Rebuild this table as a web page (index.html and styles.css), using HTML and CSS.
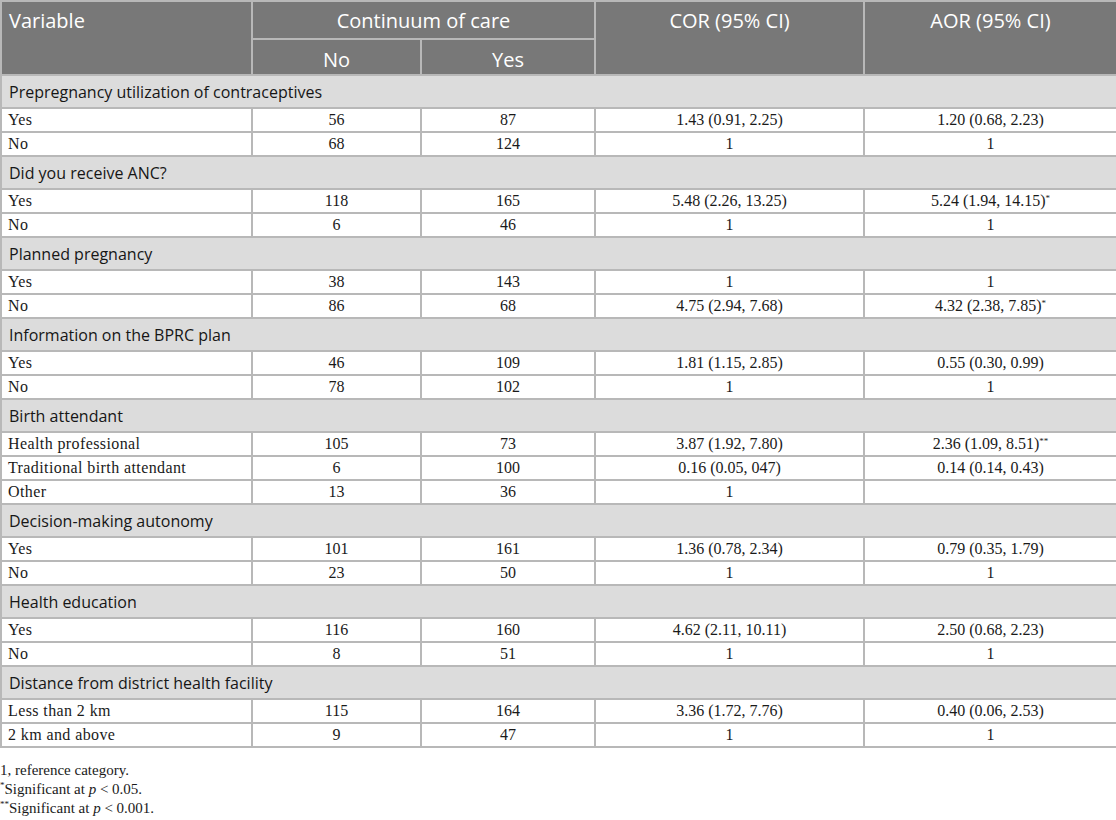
FILE: index.html
```html
<!DOCTYPE html>
<html lang="en">
<head>
    <meta charset="UTF-8">
    <meta name="viewport" content="width=device-width, initial-scale=1.0">
    <title>Continuum of care</title>
    <link rel="stylesheet" href="styles.css">
</head>
<body>
    <table class="results">
        <colgroup>
            <col class="c-var">
            <col class="c-no">
            <col class="c-yes">
            <col class="c-cor">
            <col class="c-aor">
        </colgroup>
        <thead>
            <tr class="head-top">
                <th rowspan="2" class="left">Variable</th>
                <th colspan="2">Continuum of care</th>
                <th rowspan="2">COR (95% CI)</th>
                <th rowspan="2">AOR (95% CI)</th>
            </tr>
            <tr class="head-sub">
                <th>No</th>
                <th>Yes</th>
            </tr>
        </thead>
        <tbody>
            <tr class="group"><td colspan="5">Prepregnancy utilization of contraceptives</td></tr>
            <tr><td class="label">Yes</td><td>56</td><td>87</td><td>1.43 (0.91, 2.25)</td><td>1.20 (0.68, 2.23)</td></tr>
            <tr><td class="label">No</td><td>68</td><td>124</td><td>1</td><td>1</td></tr>

            <tr class="group"><td colspan="5">Did you receive ANC?</td></tr>
            <tr><td class="label">Yes</td><td>118</td><td>165</td><td>5.48 (2.26, 13.25)</td><td>5.24 (1.94, 14.15)<sup>*</sup></td></tr>
            <tr><td class="label">No</td><td>6</td><td>46</td><td>1</td><td>1</td></tr>

            <tr class="group"><td colspan="5">Planned pregnancy</td></tr>
            <tr><td class="label">Yes</td><td>38</td><td>143</td><td>1</td><td>1</td></tr>
            <tr><td class="label">No</td><td>86</td><td>68</td><td>4.75 (2.94, 7.68)</td><td>4.32 (2.38, 7.85)<sup>*</sup></td></tr>

            <tr class="group"><td colspan="5">Information on the BPRC plan</td></tr>
            <tr><td class="label">Yes</td><td>46</td><td>109</td><td>1.81 (1.15, 2.85)</td><td>0.55 (0.30, 0.99)</td></tr>
            <tr><td class="label">No</td><td>78</td><td>102</td><td>1</td><td>1</td></tr>

            <tr class="group"><td colspan="5">Birth attendant</td></tr>
            <tr><td class="label">Health professional</td><td>105</td><td>73</td><td>3.87 (1.92, 7.80)</td><td>2.36 (1.09, 8.51)<sup>**</sup></td></tr>
            <tr><td class="label">Traditional birth attendant</td><td>6</td><td>100</td><td>0.16 (0.05, 047)</td><td>0.14 (0.14, 0.43)</td></tr>
            <tr><td class="label">Other</td><td>13</td><td>36</td><td>1</td><td></td></tr>

            <tr class="group"><td colspan="5">Decision-making autonomy</td></tr>
            <tr><td class="label">Yes</td><td>101</td><td>161</td><td>1.36 (0.78, 2.34)</td><td>0.79 (0.35, 1.79)</td></tr>
            <tr><td class="label">No</td><td>23</td><td>50</td><td>1</td><td>1</td></tr>

            <tr class="group"><td colspan="5">Health education</td></tr>
            <tr><td class="label">Yes</td><td>116</td><td>160</td><td>4.62 (2.11, 10.11)</td><td>2.50 (0.68, 2.23)</td></tr>
            <tr><td class="label">No</td><td>8</td><td>51</td><td>1</td><td>1</td></tr>

            <tr class="group"><td colspan="5">Distance from district health facility</td></tr>
            <tr><td class="label">Less than 2 km</td><td>115</td><td>164</td><td>3.36 (1.72, 7.76)</td><td>0.40 (0.06, 2.53)</td></tr>
            <tr><td class="label">2 km and above</td><td>9</td><td>47</td><td>1</td><td>1</td></tr>
        </tbody>
    </table>

    <div class="notes">
        <p>1, reference category.</p>
        <p><sup>*</sup>Significant at <i>p</i> &lt; 0.05.</p>
        <p><sup>**</sup>Significant at <i>p</i> &lt; 0.001.</p>
    </div>
</body>
</html>
```

FILE: styles.css
```css
body {
    margin: 0;
    padding: 0;
    background-color: #fff;
    font-family: "Liberation Serif", "Times New Roman", serif;
    color: #1a1a1a;
}

.results {
    width: 1116px;
    border-collapse: collapse;
    table-layout: fixed;
}

.c-var { width: 251px; }
.c-no { width: 169px; }
.c-yes { width: 174px; }
.c-cor { width: 269px; }
.c-aor { width: 253px; }

.results th,
.results td {
    border: 2px solid #b8b8b8;
}

/* data rows */
.results td {
    height: 22px;
    padding: 0 6px;
    font-size: 16px;
    text-align: center;
}

.results td.label {
    text-align: left;
    font-size: 16px;
    letter-spacing: 0.4px;
}

/* header */
.results th {
    background-color: #787878;
    color: #fff;
    font-family: "Open Sans", "Noto Sans", sans-serif;
    font-weight: normal;
    font-size: 20px;
    line-height: 26px;
    vertical-align: top;
    text-align: center;
    padding: 6px 7px 0;
}

.results th.left {
    text-align: left;
}

.head-top th {
    height: 30px;
}

.head-sub th {
    height: 27px;
    padding-top: 7px;
}

/* section rows */
.results .group td {
    background-color: #dcdcdc;
    font-family: "Open Sans", "Noto Sans", sans-serif;
    font-size: 16px;
    color: #161616;
    text-align: left;
    height: 31px;
    padding: 0 7px;
}

.results sup {
    font-size: 9px;
    vertical-align: 5px;
    line-height: 0;
}

.notes {
    margin-top: 13px;
    font-size: 15px;
    line-height: 19px;
}

.notes p {
    margin: 0;
}

.notes sup {
    font-size: 9px;
    vertical-align: 6px;
    line-height: 0;
}
```
